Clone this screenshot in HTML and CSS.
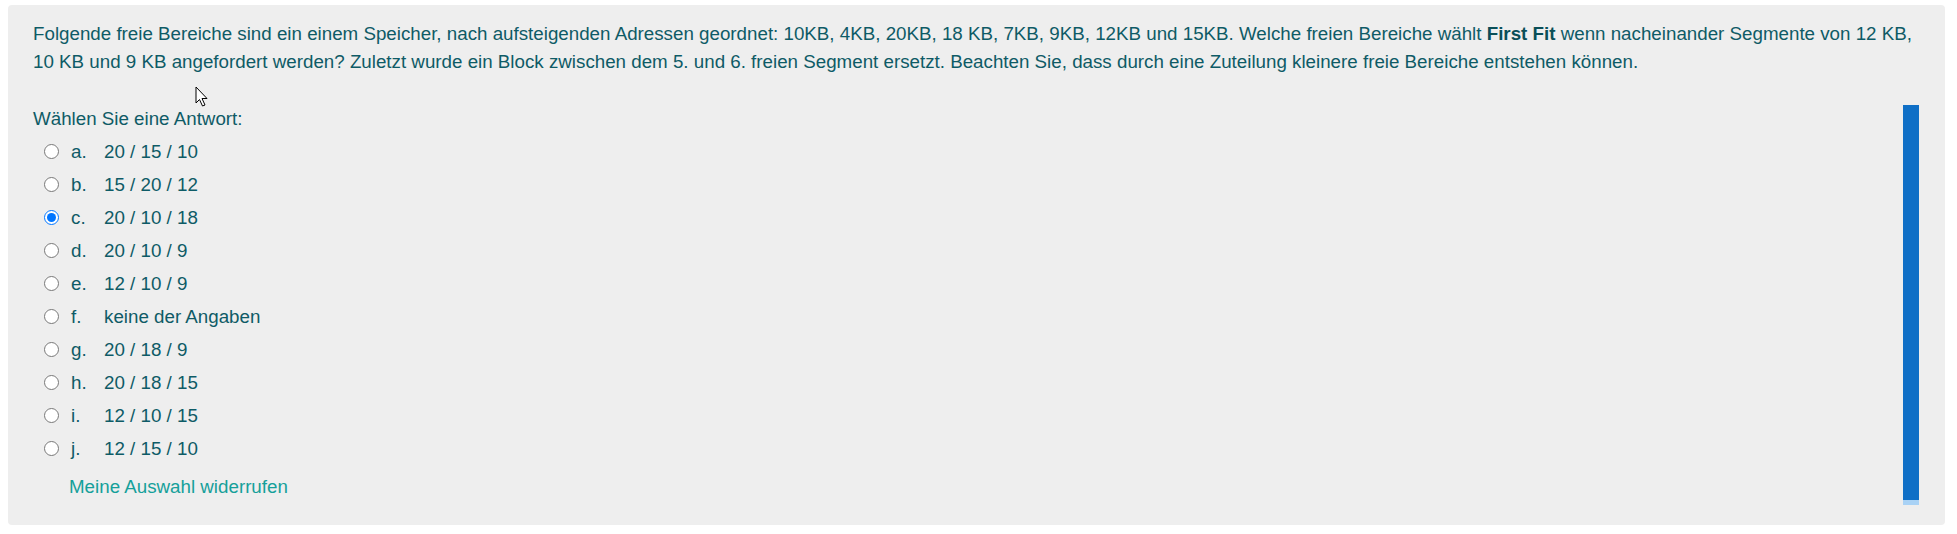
FILE: index.html
```html
<!DOCTYPE html>
<html lang="de">
<head>
<meta charset="utf-8">
<link rel="stylesheet" href="styles.css">
</head>
<body>
<div class="card">
  <div class="qtext">Folgende freie Bereiche sind ein einem Speicher, nach aufsteigenden Adressen geordnet: 10KB, 4KB, 20KB, 18 KB, 7KB, 9KB, 12KB und 15KB. Welche freien Bereiche wählt <strong>First Fit</strong> wenn nacheinander Segmente von 12 KB, 10 KB und 9 KB angefordert werden? Zuletzt wurde ein Block zwischen dem 5. und 6. freien Segment ersetzt. Beachten Sie, dass durch eine Zuteilung kleinere freie Bereiche entstehen können.</div>
  <div class="answer-area">
    <div class="answers">
      <div class="prompt">Wählen Sie eine Antwort:</div>
      <label class="opt"><input type="radio" name="q"><span class="letter">a.</span><span>20 / 15 / 10</span></label>
      <label class="opt"><input type="radio" name="q"><span class="letter">b.</span><span>15 / 20 / 12</span></label>
      <label class="opt"><input type="radio" name="q" checked><span class="letter">c.</span><span>20 / 10 / 18</span></label>
      <label class="opt"><input type="radio" name="q"><span class="letter">d.</span><span>20 / 10 / 9</span></label>
      <label class="opt"><input type="radio" name="q"><span class="letter">e.</span><span>12 / 10 / 9</span></label>
      <label class="opt"><input type="radio" name="q"><span class="letter">f.</span><span>keine der Angaben</span></label>
      <label class="opt"><input type="radio" name="q"><span class="letter">g.</span><span>20 / 18 / 9</span></label>
      <label class="opt"><input type="radio" name="q"><span class="letter">h.</span><span>20 / 18 / 15</span></label>
      <label class="opt"><input type="radio" name="q"><span class="letter">i.</span><span>12 / 10 / 15</span></label>
      <label class="opt"><input type="radio" name="q"><span class="letter">j.</span><span>12 / 15 / 10</span></label>
      <a class="clear" href="#">Meine Auswahl widerrufen</a>
    </div>
    <div class="bar"><div class="bar-fill"></div></div>
  </div>
  <svg class="cursor" width="14" height="22" viewBox="0 0 14 22"><path d="M1 1 L1 17 L4.5 13.5 L7.5 20 L10 19 L7 12.5 L12 12.5 Z" fill="#fff" stroke="#000" stroke-width="1" stroke-linejoin="miter"/></svg>
</div>
</body>
</html>
```
FILE: styles.css
```css
html, body {
  margin: 0;
  background: #ffffff;
}
body {
  padding: 5px 12px 9px 8px;
  font-family: "Liberation Sans", Arial, sans-serif;
  font-size: 18.75px;
  color: #0e5b66;
}
.card {
  position: relative;
  background: #eeeeee;
  border-radius: 4px;
  padding: 15px 26px 20px 25px;
}
.qtext {
  line-height: 28px;
}
.qtext strong {
  color: #0a4f58;
}
.answer-area {
  display: flex;
  margin-top: 29px;
}
.answers {
  flex: 1;
  display: flex;
  flex-direction: column;
  align-items: flex-start;
}
.prompt {
  line-height: 28px;
  margin-bottom: 2px;
}
.opt {
  display: flex;
  align-items: center;
  height: 33px;
  line-height: 28px;
  padding-left: 11px;
}
.opt input {
  margin: 0 12px 0 0;
  width: 15px;
  height: 15px;
}
.letter {
  width: 33px;
}
.clear {
  color: #15a09a;
  text-decoration: none;
  line-height: 28px;
  margin: 8px 0 0 36px;
}
.bar {
  width: 16px;
  height: 400px;
  background: #a9d2f5;
}
.bar-fill {
  height: 395px;
  background: #0f6fc6;
}
.cursor {
  position: absolute;
  left: 187px;
  top: 81px;
}
```
